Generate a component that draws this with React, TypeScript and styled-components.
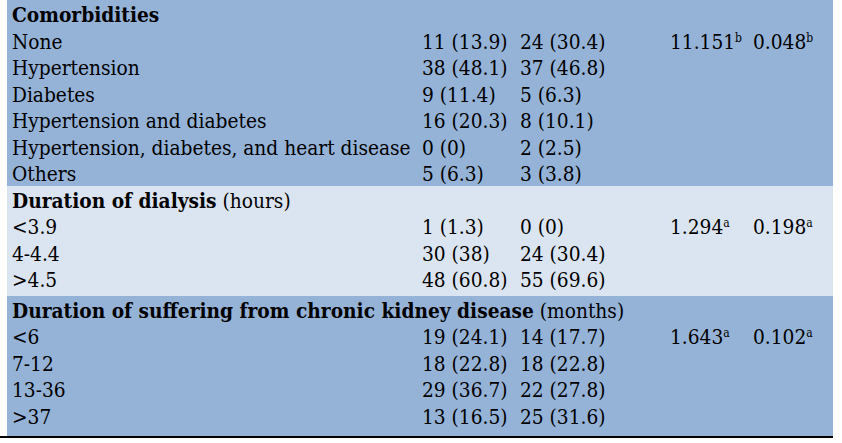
import styled, { createGlobalStyle } from "styled-components";

const GlobalStyle = createGlobalStyle`
  html, body {
    margin: 0;
    padding: 0;
    background: #ffffff;
  }
  body {
    font-family: "DejaVu Serif Condensed", "DejaVu Serif", "Liberation Serif", serif;
    font-stretch: condensed;
    color: #000000;
  }
`;

const Table = styled.div`
  width: 833px;
  border-bottom: 2px solid #000000;
`;

const Group = styled.div<{ $shade: "dark" | "light"; $extra?: number }>`
  margin-left: 7px;
  background: ${(p) => (p.$shade === "dark" ? "#95b3d7" : "#dbe5f1")};
  padding-bottom: ${(p) => p.$extra ?? 0}px;
`;

const Row = styled.div`
  display: grid;
  grid-template-columns: 415px 98px 150px 83px 1fr;
  height: 26.5px;
  align-items: center;
  font-size: 20.7px;
  line-height: 26.5px;
  white-space: nowrap;
`;

const Cell = styled.div<{ $first?: boolean }>`
  padding-left: ${(p) => (p.$first ? "5px" : "0")};
  padding-top: 2px;
`;

const Heading = styled.span`
  font-weight: 700;
`;

const Sup = styled.sup`
  font-size: 12px;
  vertical-align: 7px;
  line-height: 0;
`;

type Item = { label: string; a: string; b: string; stat?: string; p?: string; mark?: string };

type Section = {
  title: string;
  unit?: string;
  shade: "dark" | "light";
  extra?: number;
  items: Item[];
};

const sections: Section[] = [
  {
    title: "Comorbidities",
    shade: "dark",
    items: [
      { label: "None", a: "11 (13.9)", b: "24 (30.4)", stat: "11.151", p: "0.048", mark: "b" },
      { label: "Hypertension", a: "38 (48.1)", b: "37 (46.8)" },
      { label: "Diabetes", a: "9 (11.4)", b: "5 (6.3)" },
      { label: "Hypertension and diabetes", a: "16 (20.3)", b: "8 (10.1)" },
      { label: "Hypertension, diabetes, and heart disease", a: "0 (0)", b: "2 (2.5)" },
      { label: "Others", a: "5 (6.3)", b: "3 (3.8)" },
    ],
  },
  {
    title: "Duration of dialysis",
    unit: "(hours)",
    shade: "light",
    extra: 4,
    items: [
      { label: "<3.9", a: "1 (1.3)", b: "0 (0)", stat: "1.294", p: "0.198", mark: "a" },
      { label: "4-4.4", a: "30 (38)", b: "24 (30.4)" },
      { label: ">4.5", a: "48 (60.8)", b: "55 (69.6)" },
    ],
  },
  {
    title: "Duration of suffering from chronic kidney disease",
    unit: "(months)",
    shade: "dark",
    extra: 8,
    items: [
      { label: "<6", a: "19 (24.1)", b: "14 (17.7)", stat: "1.643", p: "0.102", mark: "a" },
      { label: "7-12", a: "18 (22.8)", b: "18 (22.8)" },
      { label: "13-36", a: "29 (36.7)", b: "22 (27.8)" },
      { label: ">37", a: "13 (16.5)", b: "25 (31.6)" },
    ],
  },
];

export default function App() {
  return (
    <>
      <GlobalStyle />
      <Table>
        {sections.map((s) => (
          <Group key={s.title} $shade={s.shade} $extra={s.extra}>
            <Row>
              <Cell $first style={{ gridColumn: "1 / -1" }}>
                <Heading>{s.title}</Heading>
                {s.unit ? ` ${s.unit}` : ""}
              </Cell>
            </Row>
            {s.items.map((it) => (
              <Row key={it.label}>
                <Cell $first>{it.label}</Cell>
                <Cell>{it.a}</Cell>
                <Cell>{it.b}</Cell>
                <Cell>
                  {it.stat}
                  {it.mark && <Sup>{it.mark}</Sup>}
                </Cell>
                <Cell>
                  {it.p}
                  {it.mark && <Sup>{it.mark}</Sup>}
                </Cell>
              </Row>
            ))}
          </Group>
        ))}
      </Table>
    </>
  );
}
